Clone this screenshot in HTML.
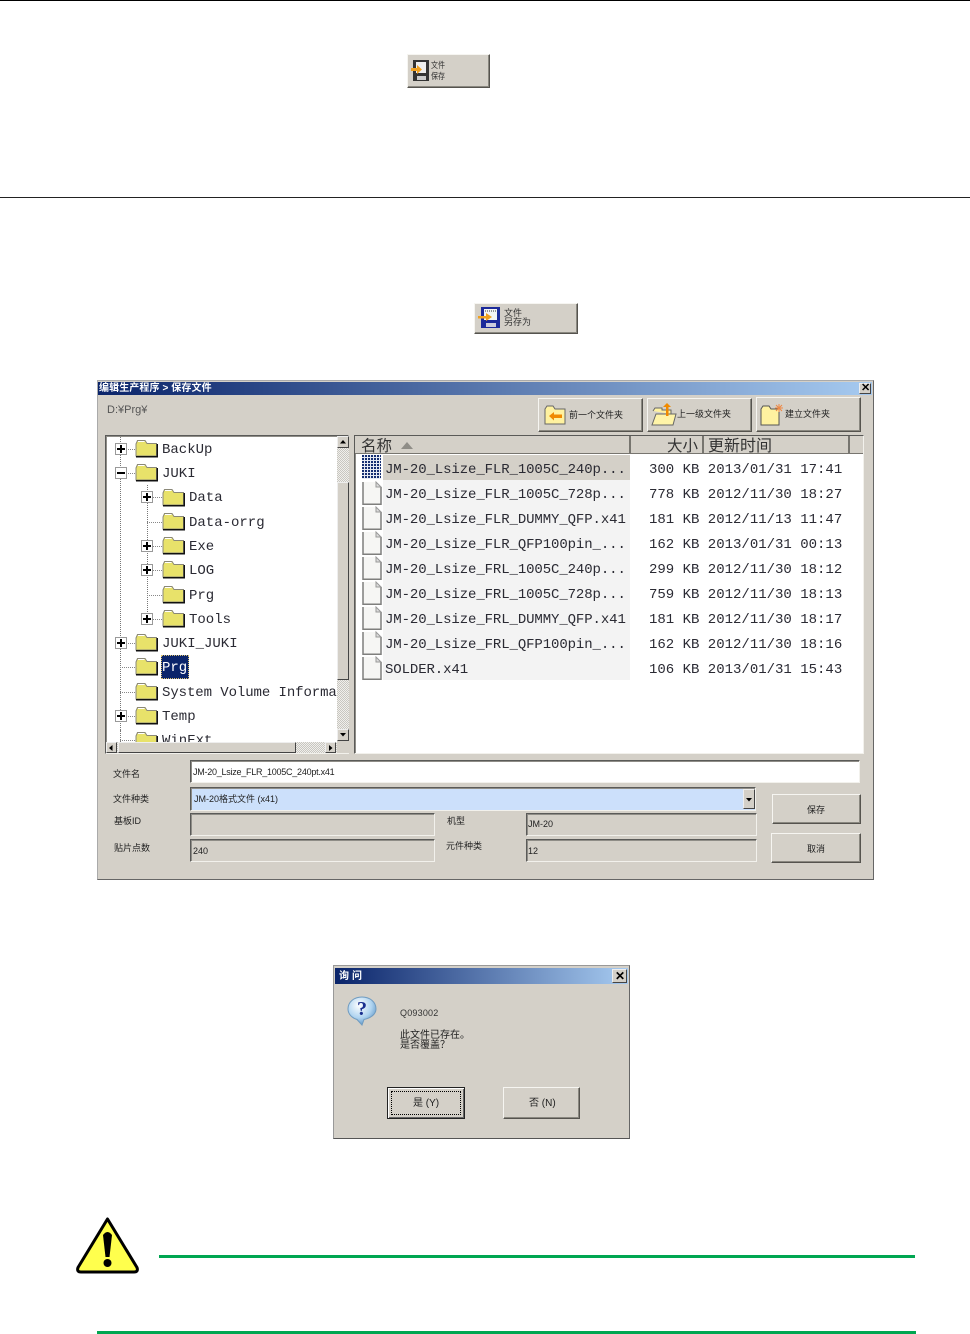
<!DOCTYPE html>
<html lang="zh"><head><meta charset="utf-8"><title>保存文件</title>
<style>
html,body{margin:0;padding:0;background:#fff}
#p{position:relative;width:970px;height:1334px;overflow:hidden;background:#fff;font-family:"Liberation Sans","Noto Sans CJK SC",sans-serif}
#p div,#p svg{position:absolute;box-sizing:border-box}
.bg{background:#d4d0c8}
.r{background:#d4d0c8;border:1px solid;border-color:#f6f5f1 #55534e #55534e #f6f5f1;box-shadow:inset -1px -1px 0 #8a8880}
.s{border:1px solid;border-color:#5a5a58 #f2f1ec #f2f1ec #5a5a58;box-shadow:inset 1px 1px 0 #8f8d87}
.t{white-space:nowrap;line-height:16px;height:16px;color:#333}
.m{font-family:"Liberation Mono","Noto Serif CJK SC",monospace;font-size:14px;color:#2a2a33}
.n{letter-spacing:-.1px}
.x{font-size:9px;color:#222}
.y{font-size:9px;color:#222}
.tb{background:linear-gradient(90deg,#0a246a,#a6caf0);color:#fff}
.sb{background:#d4d0c8;border:1px solid;border-color:#eee #444 #444 #eee}
.ck{background-color:#f0efec;background-image:linear-gradient(45deg,#c8c6c0 25%,transparent 25%,transparent 75%,#c8c6c0 75%),linear-gradient(45deg,#c8c6c0 25%,transparent 25%,transparent 75%,#c8c6c0 75%);background-size:2px 2px;background-position:0 0,1px 1px}
.row{background:#f3f3f3;left:383px;width:247px;height:25px}
.pm{width:12px;height:12px;background:#fff;border:1px solid #999}
.pm:before{content:"";position:absolute;left:1px;top:4px;width:8px;height:2px;background:#000}
.pl:after{content:"";position:absolute;left:4px;top:1px;width:2px;height:8px;background:#000}
.dh{border-top:1px dotted #888;height:1px}
.dv{border-left:1px dotted #777;width:1px}
.hd{background:#d4d0c8;height:18px;top:436px;border-right:2px solid #77756f;border-bottom:1px solid #77756f}
</style></head><body><div id="p">

<svg width="1" height="1" style="left:0;top:0"><defs>
<symbol id="f" viewBox="0 0 23 19"><path d="M1 5 L2.500 1.500 H10 L12 4.500 H21.500 V17 H1Z" fill="#e8e26a" stroke="#8a8878"/><path d="M1 17.800 H22.300 V5" fill="none" stroke="#111" stroke-width="1.500"/><path d="M3 2.500H9.500" stroke="#fff"/></symbol>
<symbol id="d" viewBox="0 0 20 24"><path d="M1 1 H14 L19 6 V23 H1Z" fill="#f6f6f4"/><path d="M1 1V23.300H19V6" fill="none" stroke="#7f7f7d" stroke-width="1.500"/><path d="M14 1 V6 H19Z" fill="#ddd" stroke="#999"/></symbol>
</defs></svg>

<div style="left:0;top:0;width:970px;height:1px;background:#000"></div>
<div style="left:0;top:197px;width:970px;height:1px;background:#222"></div>

<!-- top button -->
<div class="r" style="left:407px;top:54px;width:83px;height:34px"></div>
<svg style="left:411px;top:59px" width="19" height="23" viewBox="0 0 19 23"><rect x="2" y="1" width="16" height="21" fill="#333"/><rect x="5" y="3" width="10" height="11" fill="#eee"/><rect x="6" y="17" width="9" height="4" fill="#ccc"/><path d="M0 9H6V6L11 10.500 6 15V12H0Z" fill="#f0a020"/></svg>
<div class="t" style="left:431px;top:61px;font-size:7px;line-height:9px;height:18px;color:#333;transform:scaleY(1.2);transform-origin:0 0">文件<br>保存</div>

<!-- second button -->
<div class="r" style="left:474px;top:303px;width:104px;height:31px"></div>
<svg style="left:478px;top:306px" width="23" height="23" viewBox="0 0 23 23"><rect x="3" y="1" width="19" height="21" fill="#1c2a9a"/><rect x="6" y="3" width="13" height="11" fill="#f4f4f4"/><path d="M7 5h11" stroke="#333" stroke-dasharray="1 1"/><rect x="8" y="17" width="10" height="4" fill="#ccd"/><path d="M0 10H8V7L14 11 8 15V12.500H0Z" fill="#f0a020"/></svg>
<div class="t" style="left:504px;top:309px;font-size:9px;line-height:9px;height:20px;color:#333">文件<br>另存为</div>

<!-- main dialog -->
<div class="bg" style="left:97px;top:380px;width:777px;height:500px;border:1px solid #aaa;border-bottom:1px solid #666;border-right:1px solid #666"></div>
<div class="tb" style="left:98px;top:382px;width:774px;height:13px"></div>
<div class="t" style="left:99px;top:382px;font-size:10px;font-weight:700;color:#fff;letter-spacing:.1px;height:13px;line-height:13px">编辑生产程序 &gt; 保存文件</div>
<div class="sb" style="left:859px;top:383px;width:12px;height:11px"></div>
<div class="t" style="left:861px;top:380px;font-size:11px;font-weight:700;color:#000">✕</div>
<div class="t" style="left:107px;top:402px;font-size:11px;color:#555">D:¥Prg¥</div>

<div class="r" style="left:538px;top:398px;width:105px;height:34px"></div>
<div class="r" style="left:647px;top:398px;width:105px;height:34px"></div>
<div class="r" style="left:756px;top:397px;width:105px;height:35px"></div>
<svg style="left:544px;top:405px" width="22" height="20" viewBox="0 0 22 20"><path d="M1 4 L3 1H9L11 4H21V19H1Z" fill="#fff2a0" stroke="#666"/><path d="M5 11 L10 7V9.500H18V13H10V15.500Z" fill="#f08a00"/></svg>
<svg style="left:651px;top:402px" width="26" height="24" viewBox="0 0 26 24"><path d="M2 9 L4 6H11V8H20V12" fill="#fff2a0" stroke="#666"/><path d="M5 12H25L22 23H1Z" fill="#fff4a8" stroke="#666"/><path d="M15 14 V5 H12 L16 1 L20 5 H17.500 V14Z" fill="#f08a00"/></svg>
<svg style="left:760px;top:403px" width="24" height="23" viewBox="0 0 24 23"><path d="M1 6 L3 3H9L11 6H19V22H1Z" fill="#fff2a0" stroke="#555"/><path d="M19 1V9M15 5H23M16 2L22 8M22 2L16 8" stroke="#e84"/></svg>
<div class="t y" style="left:569px;top:407px">前一个文件夹</div>
<div class="t y" style="left:677px;top:406px">上一级文件夹</div>
<div class="t y" style="left:785px;top:406px">建立文件夹</div>

<!-- tree panel -->
<div class="s" style="left:105px;top:435px;width:244px;height:319px;background:#fff"></div>
<div class="dv" style="left:120px;top:437px;height:305px"></div>
<div class="dv" style="left:147px;top:485px;height:135px"></div>
<div class="dh" style="left:126px;top:449px;width:9px"></div>
<div class="dh" style="left:126px;top:473px;width:9px"></div>
<div class="dh" style="left:153px;top:497px;width:9px"></div>
<div class="dh" style="left:147px;top:522px;width:15px"></div>
<div class="dh" style="left:153px;top:546px;width:9px"></div>
<div class="dh" style="left:153px;top:570px;width:9px"></div>
<div class="dh" style="left:147px;top:595px;width:15px"></div>
<div class="dh" style="left:153px;top:619px;width:9px"></div>
<div class="dh" style="left:126px;top:643px;width:9px"></div>
<div class="dh" style="left:120px;top:667px;width:15px"></div>
<div class="dh" style="left:120px;top:692px;width:15px"></div>
<div class="dh" style="left:126px;top:716px;width:9px"></div>

<div class="pm pl" style="left:115px;top:443px"></div>
<div class="pm" style="left:115px;top:467px"></div>
<div class="pm pl" style="left:141px;top:491px"></div>
<div class="pm pl" style="left:141px;top:540px"></div>
<div class="pm pl" style="left:141px;top:564px"></div>
<div class="pm pl" style="left:141px;top:613px"></div>
<div class="pm pl" style="left:115px;top:637px"></div>
<div class="pm pl" style="left:115px;top:710px"></div>

<svg style="left:135px;top:439px" width="23" height="19"><use href="#f"/></svg>
<svg style="left:135px;top:463px" width="23" height="19"><use href="#f"/></svg>
<svg style="left:162px;top:488px" width="23" height="19"><use href="#f"/></svg>
<svg style="left:162px;top:512px" width="23" height="19"><use href="#f"/></svg>
<svg style="left:162px;top:536px" width="23" height="19"><use href="#f"/></svg>
<svg style="left:162px;top:560px" width="23" height="19"><use href="#f"/></svg>
<svg style="left:162px;top:585px" width="23" height="19"><use href="#f"/></svg>
<svg style="left:162px;top:609px" width="23" height="19"><use href="#f"/></svg>
<svg style="left:135px;top:633px" width="23" height="19"><use href="#f"/></svg>
<svg style="left:135px;top:657px" width="23" height="19"><use href="#f"/></svg>
<svg style="left:135px;top:682px" width="23" height="19"><use href="#f"/></svg>
<svg style="left:135px;top:706px" width="23" height="19"><use href="#f"/></svg>

<div class="t m" style="left:162px;top:442px">BackUp</div>
<div class="t m" style="left:162px;top:466px">JUKI</div>
<div class="t m" style="left:189px;top:490px">Data</div>
<div class="t m" style="left:189px;top:515px">Data-orrg</div>
<div class="t m" style="left:189px;top:539px">Exe</div>
<div class="t m" style="left:189px;top:563px">LOG</div>
<div class="t m" style="left:189px;top:588px">Prg</div>
<div class="t m" style="left:189px;top:612px">Tools</div>
<div class="t m" style="left:162px;top:636px">JUKI_JUKI</div>
<div style="left:161px;top:655px;width:28px;height:24px;background:#0a246a;border:1px dotted #d8c070"></div>
<div class="t m" style="left:162px;top:660px;color:#fff">Prg</div>
<div style="left:107px;top:684px;width:230px;height:17px;overflow:hidden"><div class="t m" style="left:55px;top:1px;letter-spacing:-.08px">System Volume Information</div></div>
<div class="t m" style="left:162px;top:709px">Temp</div>
<div style="left:107px;top:730px;width:230px;height:12px;overflow:hidden;background:#fff"><div class="dv" style="left:13px;top:0;height:12px"></div><div class="dh" style="left:13px;top:10px;width:15px"></div><svg style="left:28px;top:1px" width="23" height="19"><use href="#f"/></svg><div class="t m" style="left:55px;top:3px">WinExt</div></div>

<!-- tree scrollbars -->
<div class="ck" style="left:337px;top:448px;width:12px;height:281px"></div>
<div class="sb" style="left:337px;top:436px;width:12px;height:12px"></div>
<svg style="left:340px;top:440px" width="6" height="4"><path d="M0 3.500H6L3 0Z" fill="#000"/></svg>
<div class="sb" style="left:337px;top:482px;width:12px;height:198px"></div>
<div class="sb" style="left:337px;top:729px;width:12px;height:12px"></div>
<svg style="left:340px;top:733px" width="6" height="4"><path d="M0 0H6L3 3.500Z" fill="#000"/></svg>
<div class="ck" style="left:106px;top:742px;width:231px;height:11px"></div>
<div class="sb" style="left:106px;top:742px;width:11px;height:11px"></div>
<svg style="left:109px;top:745px" width="4" height="6"><path d="M3.500 0V6L0 3Z" fill="#000"/></svg>
<div class="sb" style="left:118px;top:742px;width:178px;height:11px"></div>
<div class="sb" style="left:325px;top:742px;width:11px;height:11px"></div>
<svg style="left:329px;top:745px" width="4" height="6"><path d="M0 0V6L3.500 3Z" fill="#000"/></svg>
<div class="bg" style="left:337px;top:741px;width:12px;height:12px"></div>

<!-- list panel -->
<div class="s" style="left:354px;top:435px;width:510px;height:319px;background:#fff"></div>
<div class="hd" style="left:355px;width:276px"></div>
<div class="hd" style="left:631px;width:73px"></div>
<div class="hd" style="left:704px;width:146px"></div>
<div class="bg" style="left:850px;top:436px;width:13px;height:18px;border-bottom:1px solid #77756f"></div>
<div class="t" style="left:361px;top:439px;font-size:15.500px;color:#333">名称</div>
<svg style="left:401px;top:442px" width="12" height="7"><path d="M0 7H12L6 0Z" fill="#8f8d87"/></svg>
<div class="t" style="left:667px;top:439px;font-size:15.500px;color:#333">大小</div>
<div class="t" style="left:708px;top:439px;font-size:16px;color:#333">更新时间</div>

<div class="bg" style="left:383px;top:455px;width:247px;height:25px"></div>
<div class="row" style="top:480px"></div>
<div class="row" style="top:505px"></div>
<div class="row" style="top:530px"></div>
<div class="row" style="top:555px"></div>
<div class="row" style="top:580px"></div>
<div class="row" style="top:605px"></div>
<div class="row" style="top:630px"></div>
<div class="row" style="top:655px"></div>

<div style="left:362px;top:455px;width:19px;height:24px;background-color:#e8ecf4;background-image:radial-gradient(circle at 1px 1px,#0a246a 1px,transparent 1.300px);background-size:3px 3px"></div>
<svg style="left:362px;top:481px" width="20" height="24"><use href="#d"/></svg>
<svg style="left:362px;top:506px" width="20" height="24"><use href="#d"/></svg>
<svg style="left:362px;top:531px" width="20" height="24"><use href="#d"/></svg>
<svg style="left:362px;top:556px" width="20" height="24"><use href="#d"/></svg>
<svg style="left:362px;top:581px" width="20" height="24"><use href="#d"/></svg>
<svg style="left:362px;top:606px" width="20" height="24"><use href="#d"/></svg>
<svg style="left:362px;top:631px" width="20" height="24"><use href="#d"/></svg>
<svg style="left:362px;top:656px" width="20" height="24"><use href="#d"/></svg>

<div class="t m n" style="left:385px;top:462px">JM-20_Lsize_FLR_1005C_240p...</div>
<div class="t m n" style="left:385px;top:487px">JM-20_Lsize_FLR_1005C_728p...</div>
<div class="t m n" style="left:385px;top:512px">JM-20_Lsize_FLR_DUMMY_QFP.x41</div>
<div class="t m n" style="left:385px;top:537px">JM-20_Lsize_FLR_QFP100pin_...</div>
<div class="t m n" style="left:385px;top:562px">JM-20_Lsize_FRL_1005C_240p...</div>
<div class="t m n" style="left:385px;top:587px">JM-20_Lsize_FRL_1005C_728p...</div>
<div class="t m n" style="left:385px;top:612px">JM-20_Lsize_FRL_DUMMY_QFP.x41</div>
<div class="t m n" style="left:385px;top:637px">JM-20_Lsize_FRL_QFP100pin_...</div>
<div class="t m n" style="left:385px;top:662px">SOLDER.x41</div>

<div class="t m" style="left:649px;top:462px">300 KB 2013/01/31 17:41</div>
<div class="t m" style="left:649px;top:487px">778 KB 2012/11/30 18:27</div>
<div class="t m" style="left:649px;top:512px">181 KB 2012/11/13 11:47</div>
<div class="t m" style="left:649px;top:537px">162 KB 2013/01/31 00:13</div>
<div class="t m" style="left:649px;top:562px">299 KB 2012/11/30 18:12</div>
<div class="t m" style="left:649px;top:587px">759 KB 2012/11/30 18:13</div>
<div class="t m" style="left:649px;top:612px">181 KB 2012/11/30 18:17</div>
<div class="t m" style="left:649px;top:637px">162 KB 2012/11/30 18:16</div>
<div class="t m" style="left:649px;top:662px">106 KB 2013/01/31 15:43</div>

<!-- form -->
<div class="t y" style="left:113px;top:766px">文件名</div>
<div class="t y" style="left:113px;top:791px">文件种类</div>
<div class="t y" style="left:114px;top:813px">基板ID</div>
<div class="t y" style="left:114px;top:840px">贴片点数</div>
<div class="t y" style="left:447px;top:813px">机型</div>
<div class="t y" style="left:446px;top:838px">元件种类</div>

<div class="s" style="left:190px;top:760px;width:670px;height:23px;background:#fff"></div>
<div class="t x" style="left:193px;top:764px;letter-spacing:-.25px">JM-20_Lsize_FLR_1005C_240pt.x41</div>
<div class="s" style="left:190px;top:787px;width:566px;height:24px;background:#cce0fb"></div>
<div class="t x" style="left:194px;top:791px">JM-20格式文件 (x41)</div>
<div class="sb" style="left:743px;top:789px;width:12px;height:20px"></div>
<svg style="left:746px;top:798px" width="6" height="4"><path d="M0 0H6L3 3.500Z" fill="#000"/></svg>
<div class="s" style="left:190px;top:813px;width:245px;height:23px"></div>
<div class="s" style="left:190px;top:839px;width:245px;height:23px"></div>
<div class="t x" style="left:193px;top:843px">240</div>
<div class="s" style="left:526px;top:813px;width:231px;height:23px"></div>
<div class="s" style="left:526px;top:839px;width:231px;height:23px"></div>
<div class="t x" style="left:528px;top:816px">JM-20</div>
<div class="t x" style="left:528px;top:843px">12</div>
<div class="r" style="left:772px;top:794px;width:89px;height:30px"></div>
<div class="r" style="left:771px;top:833px;width:90px;height:30px"></div>
<div class="t y" style="left:807px;top:802px">保存</div>
<div class="t y" style="left:807px;top:841px">取消</div>

<!-- confirm dialog -->
<div class="bg" style="left:333px;top:965px;width:297px;height:174px;border:1px solid #999;border-bottom:1px solid #555;border-right:1px solid #666"></div>
<div class="tb" style="left:335px;top:968px;width:293px;height:16px"></div>
<div class="t" style="left:339px;top:969px;font-size:10px;font-weight:700;color:#fff;letter-spacing:3px">询问</div>
<div class="sb" style="left:612px;top:969px;width:15px;height:14px"></div>
<div class="t" style="left:615px;top:968px;font-size:12px;font-weight:700;color:#000">✕</div>
<svg style="left:347px;top:996px" width="30" height="30" viewBox="0 0 30 30"><defs><radialGradient id="q" cx=".4" cy=".3" r=".8"><stop offset="0" stop-color="#fff"/><stop offset=".55" stop-color="#b0d4f0"/><stop offset="1" stop-color="#4a86bc"/></radialGradient></defs><path d="M15 1C7 1 1 6 1 13c0 5 4 9 9 10.500L15 29 17 23.500C24 22 29 18 29 13 29 6 23 1 15 1Z" fill="url(#q)" stroke="#6f9bc0"/><text x="15" y="19" text-anchor="middle" font-family="Liberation Serif,serif" font-size="20" font-weight="700" fill="#1a2f8f">?</text></svg>
<div class="t x" style="left:400px;top:1005px;color:#333;letter-spacing:.2px">Q093002</div>
<div class="t" style="left:400px;top:1031px;font-size:10px;line-height:10px;height:24px;color:#222">此文件已存在。<br>是否覆盖？</div>
<div style="left:387px;top:1087px;width:78px;height:32px;background:#d4d0c8;border:1px solid #222;box-shadow:inset 1px 1px 0 #fff,inset -1px -1px 0 #666"></div>
<div style="left:391px;top:1091px;width:70px;height:24px;border:1px dotted #000"></div>
<div class="r" style="left:503px;top:1087px;width:77px;height:32px"></div>
<div class="t" style="left:413px;top:1096px;font-size:10px;color:#222">是 (Y)</div>
<div class="t" style="left:529px;top:1096px;font-size:10px;color:#222">否 (N)</div>

<!-- warning -->
<svg style="left:75px;top:1216px" width="65" height="58" viewBox="0 0 65 58"><path d="M32.500 3 L62 51.500 Q63.500 56 59 56 H6 Q1.500 56 3 51.500Z" fill="#ffff4d" stroke="#000" stroke-width="3" stroke-linejoin="round"/><path d="M28 19 Q32.500 13 37 19 L34.500 41 H30.500Z" fill="#000"/><circle cx="32.500" cy="47" r="4" fill="#000"/></svg>
<div style="left:159px;top:1255px;width:756px;height:3px;background:#00a651"></div>
<div style="left:97px;top:1331px;width:819px;height:3px;background:#00a651"></div>
</div></body></html>
